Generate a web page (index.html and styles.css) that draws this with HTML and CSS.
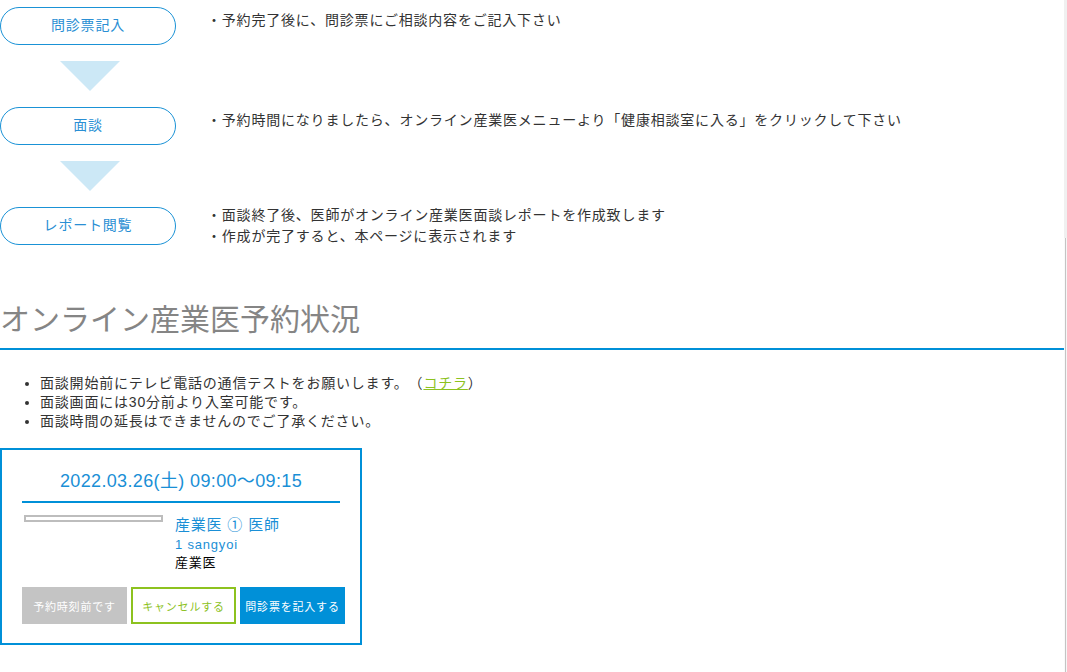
FILE: index.html
```html
<!DOCTYPE html>
<html lang="ja">
<head>
<meta charset="utf-8">
<title>オンライン産業医予約状況</title>
<link rel="stylesheet" href="styles.css">
</head>
<body>
<div class="page">
  <main class="main">
    <section class="flow">
      <div class="step">
        <div class="step-btn">問診票記入</div>
        <div class="step-text">・予約完了後に、問診票にご相談内容をご記入下さい</div>
      </div>
      <div class="arrow"></div>
      <div class="step">
        <div class="step-btn">面談</div>
        <div class="step-text">・予約時間になりましたら、オンライン産業医メニューより「健康相談室に入る」をクリックして下さい</div>
      </div>
      <div class="arrow"></div>
      <div class="step">
        <div class="step-btn">レポート閲覧</div>
        <div class="step-text multi">・面談終了後、医師がオンライン産業医面談レポートを作成致します<br>・作成が完了すると、本ページに表示されます</div>
      </div>
    </section>

    <h2 class="heading">オンライン産業医予約状況</h2>

    <ul class="notes">
      <li>面談開始前にテレビ電話の通信テストをお願いします。（<a class="link" href="#">コチラ</a>）</li>
      <li>面談画面には30分前より入室可能です。</li>
      <li>面談時間の延長はできませんのでご了承ください。</li>
    </ul>

    <div class="card">
      <div class="card-date">2022.03.26(土) 09:00～09:15</div>
      <div class="profile">
        <div class="photo-col"><div class="photo"></div></div>
        <div class="info">
          <div class="doc-name">産業医 ① 医師</div>
          <div class="doc-id">1 sangyoi</div>
          <div class="doc-role">産業医</div>
        </div>
      </div>
      <div class="actions">
        <span class="btn btn-gray">予約時刻前です</span>
        <span class="btn btn-cancel">キャンセルする</span>
        <span class="btn btn-blue">問診票を記入する</span>
      </div>
    </div>
  </main>
  <aside class="scroll-strip"></aside>
</div>
</body>
</html>
```
FILE: styles.css
```css
* { box-sizing: border-box; }
html, body { margin: 0; padding: 0; background: #fff; }
body {
  font-family: "Liberation Sans", "Noto Sans CJK JP", sans-serif;
  letter-spacing: 0.05em;
  color: #333;
  text-spacing-trim: space-all;
}
.page {
  display: flex;
  min-height: 672px;
}
.main {
  width: 1064px;
  padding-top: 7px;
}
.scroll-strip {
  width: 3px;
  min-height: 672px;
  background:
    linear-gradient(#f0f0f0, #f0f0f0) 0 0 / 3px 238px no-repeat,
    linear-gradient(90deg, #fafafa 0, #fafafa 1px, #c4c4c4 1px, #c4c4c4 2px, #f6f6f6 2px) 0 238px / 3px 100% no-repeat;
}

/* flow */
.step {
  display: flex;
  align-items: flex-start;
}
.step-btn {
  flex: none;
  width: 176px;
  height: 38px;
  border: 1px solid #1a92d6;
  border-radius: 19px;
  color: #2a8fd4;
  font-size: 14px;
  line-height: 16px;
  padding-bottom: 3px;
  display: flex;
  align-items: center;
  justify-content: center;
}
.step-text {
  margin-left: 31px;
  margin-top: 3px;
  font-size: 14px;
  line-height: 21px;
  color: #333;
}
.step-text.multi { margin-top: -2px; }
.arrow {
  width: 0;
  height: 0;
  margin: 16px 0 16px 60px;
  border-left: 30px solid transparent;
  border-right: 30px solid transparent;
  border-top: 30px solid #cce8f6;
}

/* heading */
.heading {
  margin: 53px 0 0;
  font-size: 30px;
  line-height: 40px;
  font-weight: normal;
  color: #858585;
  letter-spacing: 0;
  padding-bottom: 8px;
  border-bottom: 2px solid #0090d8;
}

/* notes */
.notes {
  margin: 24px 0 0;
  padding-left: 40px;
  font-size: 14px;
  line-height: 19px;
  color: #333;
}
.link {
  color: #8dc21f;
  text-decoration: underline;
}

/* card */
.card {
  margin-top: 17px;
  width: 362px;
  border: 2px solid #0090d8;
  padding: 19px 20px 19px;
}
.card-date {
  text-align: center;
  font-size: 18px;
  line-height: 24px;
  color: #1a8fd6;
  letter-spacing: 0.02em;
  padding-bottom: 8px;
  border-bottom: 2px solid #0090d8;
}
.profile {
  display: flex;
  margin-top: 12px;
}
.photo-col {
  width: 153px;
  flex: none;
  padding-left: 2px;
}
.photo {
  width: 139px;
  height: 7px;
  border: 2px solid #bdbdbd;
  background: #fff;
}
.info { color: #1a8fd6; }
.doc-name {
  font-size: 15px;
  line-height: 20px;
}
.doc-id {
  font-size: 13px;
  line-height: 19px;
}
.doc-role {
  font-size: 13px;
  line-height: 18px;
  color: #000;
}
.actions {
  display: flex;
  gap: 4px;
  margin-top: 15px;
}
.btn {
  flex: none;
  width: 105px;
  height: 37px;
  display: flex;
  align-items: center;
  justify-content: center;
  font-size: 11px;
}
.btn-gray { background: #c4c4c4; color: #fff; }
.btn-cancel { border: 2px solid #8dc21f; color: #8dc21f; background: #fff; }
.btn-blue { background: #0090d8; color: #fff; }
```
